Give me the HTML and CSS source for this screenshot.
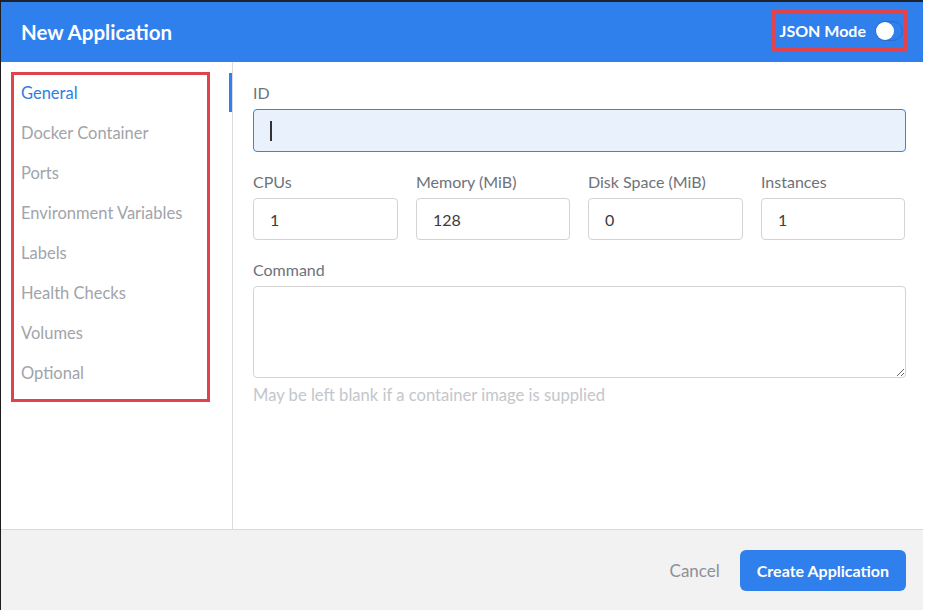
FILE: index.html
```html
<!DOCTYPE html>
<html lang="en">
<head>
<meta charset="utf-8">
<title>New Application</title>
<link rel="stylesheet" href="styles.css">
</head>
<body>
<div class="modal">
  <header class="header">
    <h1 class="title">New Application</h1>
    <div class="json-mode">
      <span class="json-label">JSON Mode</span>
      <span class="toggle"><span class="knob"></span></span>
    </div>
  </header>
  <div class="main">
    <aside class="sidebar">
      <ul class="nav">
        <li class="nav-item active">General</li>
        <li class="nav-item">Docker Container</li>
        <li class="nav-item">Ports</li>
        <li class="nav-item">Environment Variables</li>
        <li class="nav-item">Labels</li>
        <li class="nav-item">Health Checks</li>
        <li class="nav-item">Volumes</li>
        <li class="nav-item">Optional</li>
      </ul>
    </aside>
    <section class="content">
      <div class="field">
        <label class="label">ID</label>
        <div class="input input-focus"><span class="caret"></span></div>
      </div>
      <div class="row">
        <div class="field">
          <label class="label">CPUs</label>
          <div class="input">1</div>
        </div>
        <div class="field">
          <label class="label">Memory (MiB)</label>
          <div class="input">128</div>
        </div>
        <div class="field">
          <label class="label">Disk Space (MiB)</label>
          <div class="input">0</div>
        </div>
        <div class="field">
          <label class="label">Instances</label>
          <div class="input">1</div>
        </div>
      </div>
      <div class="field field-command">
        <label class="label">Command</label>
        <textarea class="textarea"></textarea>
        <p class="hint">May be left blank if a container image is supplied</p>
      </div>
    </section>
  </div>
  <footer class="footer">
    <span class="cancel">Cancel</span>
    <button class="btn-primary" type="button">Create Application</button>
  </footer>
</div>
</body>
</html>
```

FILE: styles.css
```css
* {
  box-sizing: border-box;
}

html, body {
  margin: 0;
  padding: 0;
  background: #ffffff;
}

body {
  font-family: "Lato", "Open Sans", "Liberation Sans", sans-serif;
  color: #333;
}

.modal {
  width: 923px;
  height: 610px;
  border-top: 2px solid #1d232c;
  border-left: 1px solid #1d1d1d;
  display: flex;
  flex-direction: column;
  background: #fff;
}

.header {
  height: 60px;
  flex: none;
  background: #2f80ed;
  display: flex;
  align-items: center;
  justify-content: space-between;
  padding: 0 16px 0 20px;
}

.title {
  margin: 0;
  color: #fff;
  font-size: 20.5px;
  font-weight: 700;
  line-height: 24px;
}

.json-mode {
  display: flex;
  align-items: center;
  height: 41px;
  margin-top: -3px;
  padding: 0 1px 0 5px;
  border: 3px solid #e0434c;
  gap: 9px;
}

.json-label {
  color: #fff;
  font-size: 16px;
  font-weight: 700;
}

.toggle {
  width: 28px;
  height: 20px;
  border-radius: 10px;
  border: 1px solid #2a6cc9;
  display: flex;
  align-items: center;
}

.knob {
  width: 18px;
  height: 18px;
  border-radius: 50%;
  background: #fff;
}

.main {
  flex: 1;
  display: flex;
  min-height: 0;
}

.sidebar {
  width: 232px;
  flex: none;
  border-right: 1px solid #dcdcdc;
  padding: 10px 0 0 10px;
  position: relative;
}

.sidebar::after {
  content: "";
  position: absolute;
  right: 0;
  top: 11px;
  width: 3px;
  height: 39px;
  background: #2f80ed;
}

.nav {
  list-style: none;
  margin: 0;
  width: 199px;
  border: 3px solid #e0434c;
  padding: 0 0 4px 7px;
}

.nav-item {
  height: 40px;
  line-height: 36px;
  padding-bottom: 4px;
  font-size: 16.5px;
  color: #a1a4a9;
  white-space: nowrap;
}

.nav-item.active {
  color: #2f7de0;
}

.content {
  flex: 1;
  padding: 21px 17px 0 20px;
  display: flex;
  flex-direction: column;
  gap: 20px;
}

.field {
  display: flex;
  flex-direction: column;
}

.label {
  display: block;
  font-size: 16px;
  line-height: 20px;
  color: #6e7279;
  margin-bottom: 6px;
}

.input {
  height: 42px;
  border: 1px solid #d3d3d3;
  border-radius: 4px;
  padding: 0 16px;
  display: flex;
  align-items: center;
  font-size: 16px;
  color: #3b3b3b;
  background: #fff;
}

.input-focus {
  height: 43px;
  background: #e9f1fd;
  border-color: #3d86cf;
}

.caret {
  width: 2px;
  height: 20px;
  background: #333;
}

.row {
  display: grid;
  grid-template-columns: 145px 154px 155px 144px;
  column-gap: 18px;
}

.textarea {
  display: block;
  width: 100%;
  height: 92px;
  border: 1px solid #d3d3d3;
  border-radius: 4px;
  font-family: inherit;
  font-size: 16px;
  padding: 8px 16px;
  margin: 0;
  resize: vertical;
  background: #fff;
}

.hint {
  margin: 7px 0 0;
  font-size: 16.6px;
  line-height: 20px;
  color: #c3c6cb;
}

.footer {
  height: 81px;
  flex: none;
  border-top: 1px solid #dadada;
  background: #f2f2f2;
  display: flex;
  align-items: center;
  justify-content: flex-end;
  padding: 0 17px 0 0;
  gap: 20px;
}

.cancel {
  font-size: 17px;
  color: #8d9096;
}

.btn-primary {
  height: 41px;
  padding: 0 17px;
  border: none;
  border-radius: 6px;
  background: #2f80ed;
  color: #fff;
  font-family: inherit;
  font-size: 16px;
  font-weight: 700;
}
```
